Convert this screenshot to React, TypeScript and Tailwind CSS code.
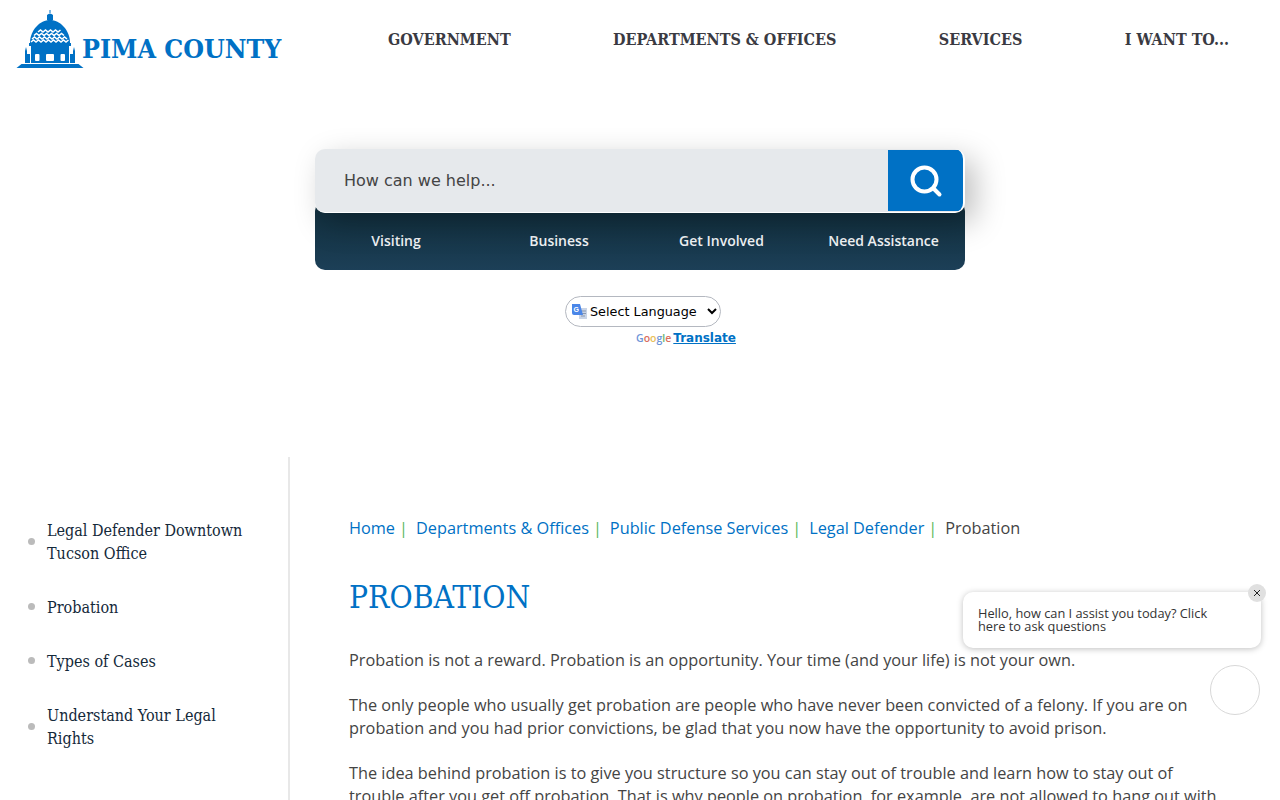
function zig(x0: number, x1: number, y: number) {
  let d = `M${x0} ${y}`;
  let up = true;
  for (let x = x0 + 2.5; x <= x1; x += 2.5) {
    d += `L${x} ${up ? y - 2 : y}`;
    up = !up;
  }
  return d;
}

export default function App() {
  const slab = "font-['DejaVu_Serif_Condensed','DejaVu_Serif',serif]";
  const sidebar = [
    ["Legal Defender Downtown", "Tucson Office"],
    ["Probation"],
    ["Types of Cases"],
    ["Understand Your Legal", "Rights"],
  ];
  const crumbs = ["Home", "Departments & Offices", "Public Defense Services", "Legal Defender"];
  return (
    <div className="relative h-[800px] overflow-hidden bg-white font-['Open_Sans',sans-serif] text-[#333]">
      <header className="flex h-[78px] items-start">
        <div className="ml-[16px] mt-[10px] flex w-[272px] shrink-0 items-end">
          <svg width="68" height="59" viewBox="0 0 68 59" className="shrink-0">
            <g fill="#0071c5">
              <rect x="33.500" y="0" width="1" height="3" />
              <path d="M31 10V5q3-3 6 0v5z" />
              <path d="M14 33C14 20 24 10 34 10S54 20 54 33z" />
              <rect x="13" y="33" width="42" height="3" />
              <rect x="15" y="36" width="38" height="17" />
              <path d="M9 53V41l1-4 1 4v3h3v9zM59 53V41l-1-4-1 4v3h-3v9z" />
              <path d="M0.500 58l5-4h57l5 4z" />
            </g>
            <g fill="none" stroke="#fff" strokeWidth="1.6">
              <path d={zig(22, 46, 22)} />
              <path d={zig(18, 50, 25.500)} />
              <path d={zig(16, 52, 29)} />
              <path d={zig(15, 53, 32)} />
            </g>
            <g fill="#fff">
              <rect x="19" y="44" width="4.500" height="7" rx="1" />
              <rect x="30" y="44" width="8" height="7" rx="1" />
              <rect x="44.500" y="44" width="4.500" height="7" rx="1" />
            </g>
          </svg>
          <span className={`mb-[3px] -ml-[2px] whitespace-nowrap ${slab} text-[26.500px] leading-[34px] font-bold text-[#0071c5]`}>PIMA COUNTY</span>
        </div>
        <nav className={`ml-[100px] mt-[30px] flex w-[841px] justify-between whitespace-nowrap ${slab} text-[16px] leading-5 font-bold text-[#3a3a42]`}>
          <span>GOVERNMENT</span>
          <span>DEPARTMENTS &amp; OFFICES</span>
          <span>SERVICES</span>
          <span>I WANT TO...</span>
        </nav>
      </header>

      <section className="ml-[315px] mt-[71px] w-[650px]">
        <div className="relative z-10 flex h-[64px] overflow-hidden rounded-[10px] border-b border-r-2 border-white bg-[#e6e9ec] shadow-[10px_10px_30px_rgba(0,0,0,0.25)]">
          <div className="flex flex-1 items-center pl-[29px] font-['DejaVu_Sans',sans-serif] text-base text-[#444]">How can we help...</div>
          <div className="my-px flex w-[75px] items-center justify-center bg-[#0071c5]">
            <svg width="36" height="36" viewBox="0 0 36 36" fill="none" stroke="#fff" strokeLinecap="round">
              <circle cx="16.500" cy="16.500" r="12" strokeWidth="4" />
              <path d="M25.500 25.500l6 6" strokeWidth="4" />
            </svg>
          </div>
        </div>
        <div className="-mt-[12px] flex h-[69px] items-center rounded-[10px] bg-gradient-to-b from-[#12303f] from-[17%] to-[#1c3f57] pt-[10px] text-sm font-semibold text-[#f1f4f6]">
          <span className="w-[162px] text-center">Visiting</span>
          <span className="w-[164px] text-center">Business</span>
          <span className="w-[161px] text-center">Get Involved</span>
          <span className="w-[163px] text-center">Need Assistance</span>
        </div>
      </section>

      <section className="ml-[565px] mt-[26px] w-[175px]">
        <div className="relative h-[31px] w-[156px]">
          <select className="h-full w-full rounded-full border border-[#b4b8c0] bg-white pl-[20px] font-['DejaVu_Sans',sans-serif] text-[12.800px] text-black">
            <option>Select Language</option>
          </select>
          <svg width="17" height="17" viewBox="0 0 17 17" className="pointer-events-none absolute left-[6px] top-[7px]">
            <path d="M8 5h8v11H8z" fill="#c9d4e6" />
            <path d="M10 8h5M10 10.500h5M10 13h4" stroke="#8a97ad" strokeWidth="1" />
            <path d="M1 1h8l3 11H3a2 2 0 0 1-2-2z" fill="#4a86e8" />
            <text x="2.500" y="8.500" fontSize="7" fill="#fff" fontWeight="700" fontFamily="Liberation Sans, sans-serif">G</text>
          </svg>
        </div>
        <div className="ml-[71px] mt-[1px] flex items-center gap-[2px] whitespace-nowrap font-['DejaVu_Sans',sans-serif] text-[12px] leading-5">
          <span className="font-['Open_Sans',sans-serif] text-[10.500px] font-semibold text-[#777]">
            <span className="text-[#6d94d8]">G</span><span className="text-[#d9705f]">o</span><span className="text-[#e8c05a]">o</span><span className="text-[#6d94d8]">g</span><span className="text-[#6bb36f]">l</span><span className="text-[#d9705f]">e</span>
          </span>
          <span className="font-bold text-[#0071c5] underline">Translate</span>
        </div>
      </section>

      <div className="mt-[109px] flex h-[400px]">
        <aside className="h-full w-[290px] shrink-0 border-r-2 border-[#e8e8e8] pl-[28px] pt-[62px]">
          <ul className={`${slab} text-[16px] leading-[23px] text-[#14293a]`}>
            {sidebar.map((lines, i) => (
              <li key={i} className="mb-[31px] flex items-center gap-[12px]">
                <span className="mb-[2px] h-[7px] w-[7px] shrink-0 rounded-full bg-[#bbbbbb]" />
                <span>
                  {lines.map((l) => (
                    <span key={l} className="block whitespace-nowrap">{l}</span>
                  ))}
                </span>
              </li>
            ))}
          </ul>
        </aside>
        <main className="pl-[59px] pt-[59px]">
          <div className="flex h-6 items-center whitespace-nowrap text-[16.300px] leading-6">
            {crumbs.map((c) => (
              <span key={c} className="mr-[8px]">
                <span className="text-[#0071c5]">{c}</span>
                <span className="ml-[4px] text-[#5cb85c]">|</span>
              </span>
            ))}
            <span className="text-[#444]">Probation</span>
          </div>
          <h1 className={`mt-[33px] ${slab} text-[31.500px] leading-[48px] font-normal text-[#0071c5]`}>PROBATION</h1>
          <div className="mt-[28px] w-[870px] text-[16.300px] leading-[23px] text-[#444]">
            <p>Probation is not a reward. Probation is an opportunity. Your time (and your life) is not your own.</p>
            <p className="mt-[22px]">The only people who usually get probation are people who have never been convicted of a felony. If you are on probation and you had prior convictions, be glad that you now have the opportunity to avoid prison.</p>
            <p className="mt-[22px]">The idea behind probation is to give you structure so you can stay out of trouble and learn how to stay out of trouble after you get off probation. That is why people on probation, for example, are not allowed to hang out with</p>
          </div>
        </main>
      </div>

      <div className="absolute left-[963px] top-[592px] h-[56px] w-[298px] rounded-[10px] bg-white pl-[15px] pr-[45px] pt-[15px] text-[12.800px] leading-[13px] text-[#333] shadow-[0_1px_6px_rgba(0,0,0,0.25)]">
        Hello, how can I assist you today? Click here to ask questions
      </div>
      <div className="absolute left-[1248px] top-[584px] flex h-[18px] w-[18px] items-center justify-center rounded-full bg-[#e0e0e0]">
        <svg width="8" height="8" viewBox="0 0 8 8" stroke="#222" strokeWidth="1"><path d="M1 1l6 6M7 1l-6 6" /></svg>
      </div>
      <div className="absolute left-[1210px] top-[665px] h-[50px] w-[50px] rounded-full border border-[#d8d8d8] bg-white" />
    </div>
  );
}
